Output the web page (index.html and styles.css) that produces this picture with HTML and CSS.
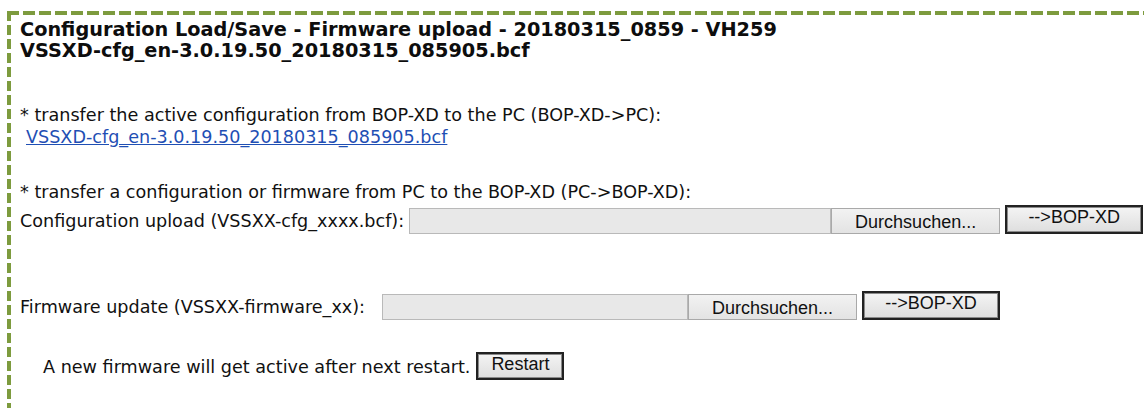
FILE: index.html
```html
<!DOCTYPE html>
<html lang="en">
<head>
<meta charset="utf-8">
<title>Configuration Load/Save</title>
<link rel="stylesheet" href="styles.css">
</head>
<body>
<div class="panel">
  <h1 class="title">Configuration Load/Save - Firmware upload - 20180315_0859 - VH259<br>VSSXD-cfg_en-3.0.19.50_20180315_085905.bcf</h1>

  <p class="note">* transfer the active configuration from BOP-XD to the PC (BOP-XD-&gt;PC):<br>
    <a class="file-link" href="#">VSSXD-cfg_en-3.0.19.50_20180315_085905.bcf</a></p>

  <p class="note note-gap">* transfer a configuration or firmware from PC to the BOP-XD (PC-&gt;BOP-XD):</p>

  <div class="upload-row">
    <span class="row-label">Configuration upload (VSSXX-cfg_xxxx.bcf):</span>
    <span class="file-field file-field-cfg">
      <span class="file-path"></span>
      <button class="btn btn-browse" type="button">Durchsuchen...</button>
    </span>
    <button class="btn btn-send" type="button">--&gt;BOP-XD</button>
  </div>

  <div class="upload-row upload-row-fw">
    <span class="row-label">Firmware update (VSSXX-firmware_xx):</span>
    <span class="file-field file-field-fw">
      <span class="file-path"></span>
      <button class="btn btn-browse" type="button">Durchsuchen...</button>
    </span>
    <button class="btn btn-send" type="button">--&gt;BOP-XD</button>
  </div>

  <div class="restart-row">
    <span class="row-label">A new firmware will get active after next restart.</span>
    <button class="btn btn-restart" type="button">Restart</button>
  </div>
</div>
</body>
</html>
```

FILE: styles.css
```css
html, body {
  margin: 0;
  padding: 0;
  background: #fff;
}

body {
  width: 1144px;
  height: 408px;
  overflow: hidden;
  font-family: "DejaVu Sans", sans-serif;
  font-size: 17.6px;
  color: #111;
}

/* dashed green frame on top and left edges */
.panel {
  box-sizing: border-box;
  height: 397px;
  margin: 11px 0 0 7px;
  padding: 8px 0 0 13px;
  background:
    repeating-linear-gradient(to right, #7d9b3e 0 12px, transparent 12px 16px) top left / 100% 4px no-repeat,
    repeating-linear-gradient(to bottom, #7d9b3e 0 10px, transparent 10px 14px) top left / 4px 100% no-repeat;
}

.title {
  margin: 0;
  font-size: 19.3px;
  font-weight: bold;
  line-height: 21px;
  color: #0d0d0d;
}

.note {
  margin: 43px 0 0;
  line-height: 22px;
}

.note-gap {
  margin-top: 33px;
}

.file-link {
  margin-left: 6px;
  color: #1f4fb4;
  text-decoration: underline;
}

.upload-row {
  display: flex;
  align-items: flex-end;
  height: 29px;
  margin-top: 2px;
}

.upload-row-fw {
  margin-top: 57px;
}

.row-label {
  align-self: center;
  padding-top: 2px;
  margin-right: 5px;
  white-space: nowrap;
}

.upload-row-fw .row-label {
  min-width: 357px;
}

.file-field {
  display: flex;
  height: 26px;
}

.file-field-cfg .file-path { width: 422px; }
.file-field-fw .file-path { width: 306px; }

.file-path {
  box-sizing: border-box;
  height: 26px;
  background: #e8e8e8;
  border: 1px solid #b9b9b9;
}

.btn {
  box-sizing: border-box;
  font-family: "Liberation Sans", Arial, sans-serif;
  font-size: 18px;
  color: #111;
  padding: 0;
  margin: 0;
  cursor: default;
}

.btn-browse {
  width: 169px;
  height: 26px;
  padding-top: 2px;
  background: linear-gradient(#f2f2f2, #e3e3e3);
  border: 1px solid #a9a9a9;
}

.btn-send {
  width: 138px;
  height: 29px;
  margin-left: 5px;
  padding-bottom: 4px;
  background: linear-gradient(#f4f4f4, #dedede);
  border: 2px solid #222;
  outline: 1px solid #8a8a8a;
  outline-offset: -3px;
}

.restart-row {
  display: flex;
  align-items: center;
  margin: 32px 0 0 23px;
}

.restart-row .row-label {
  margin-right: 6px;
}

.btn-restart {
  width: 88px;
  height: 28px;
  padding-bottom: 3px;
  background: linear-gradient(#f4f4f4, #dedede);
  border: 2px solid #222;
  outline: 1px solid #8a8a8a;
  outline-offset: -3px;
}
```
